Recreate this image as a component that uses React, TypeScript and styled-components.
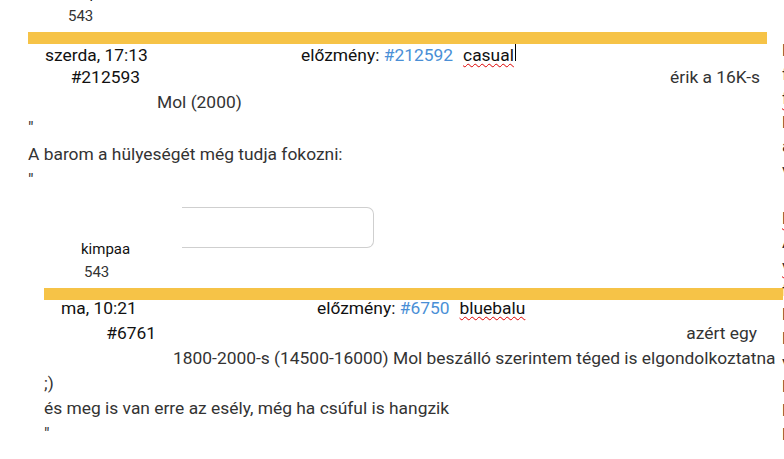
import React from 'react';
import styled, { createGlobalStyle } from 'styled-components';

const Global = createGlobalStyle`
  html, body { margin: 0; padding: 0; background: #fff; }
  body {
    font-family: Roboto, "Noto Sans", "Liberation Sans", sans-serif;
    color: #333;
    overflow: hidden;
  }
`;

const Viewport = styled.div`
  width: 784px;
  height: 459px;
  overflow: hidden;
  display: flex;
  align-items: flex-start;
`;

/* the thread is scrolled: the previous post's footer is partly above the top */
const Main = styled.main`
  flex: none;
  width: 782px;
  margin-top: -49px;
`;

const Side = styled.aside`
  flex: none;
  width: 200px;
  padding-top: 38px;
  font-size: 17.4px;
  line-height: 24px;
  color: #2a2a2a;
  white-space: nowrap;
`;

const SideLine = styled.div<{ $spell?: boolean }>`
  height: 24px;
  ${p => p.$spell ? 'text-decoration: underline wavy #d00; text-decoration-thickness: 1px; text-underline-offset: 2px;' : ''}
`;

const Post = styled.article<{ $indent: number }>`
  margin-left: ${p => p.$indent}px;
  width: 739px;
`;

const Bar = styled.div`
  height: 12px;
  background: #f6c347;
`;

const Header = styled.div`
  display: flex;
  align-items: baseline;
  height: 16px;
  line-height: 16px;
  margin-bottom: 5px;
  font-size: 17.4px;
  color: #111;
  white-space: nowrap;
`;

const When = styled.span`
  flex: none;
  width: 273px;
  padding-left: 17px;
  box-sizing: border-box;
`;

const Ref = styled.span`
  color: #4a8fd6;
`;

const Author = styled.span`
  margin-left: 10px;
  color: #111;
  text-decoration: underline wavy #d00;
  text-decoration-thickness: 1px;
  text-underline-offset: 2px;
`;

const Caret = styled.span`
  display: inline-block;
  width: 1px;
  height: 17px;
  margin-left: 1px;
  background: #000;
  vertical-align: -3px;
`;

const NumberRow = styled.div<{ $trail: number }>`
  display: flex;
  line-height: 25px;
  font-size: 17.4px;
  white-space: nowrap;
  & > span:last-child { padding-right: ${p => p.$trail}px; }
`;

const Num = styled.span`
  flex: none;
  width: 112px;
  text-align: right;
  color: #111;
`;

const Lead = styled.span`
  flex: 1;
  text-align: right;
  color: #333;
`;

const Line = styled.div<{ $indent?: number; $gap?: number }>`
  padding-left: ${p => p.$indent ?? 0}px;
  margin-top: ${p => p.$gap ?? 0}px;
  line-height: 25px;
  font-size: 17.4px;
  color: #333;
  white-space: nowrap;
`;

const Footer = styled.div<{ $indent: number; $first?: boolean }>`
  display: flex;
  align-items: flex-start;
  margin-left: ${p => p.$indent}px;
  margin-top: ${p => (p.$first ? 0 : 15)}px;
  margin-bottom: 4px;
`;

const Who = styled.div`
  flex: none;
  width: 154px;
  box-sizing: border-box;
  padding-top: 31px;
  padding-left: 53px;
  font-size: 15px;
  line-height: 23px;
`;

const Name = styled.div`
  color: #111;
`;

const Score = styled.div`
  padding-left: 3px;
  color: #333;
`;

const ReplyBox = styled.div`
  flex: none;
  width: 191px;
  height: 39px;
  border: 1px solid #cfcfcf;
  border-left: none;
  border-radius: 0 7px 7px 0;
`;

const sideLines: Array<[string, boolean]> = [
  ['lehet', false], ['fel', false], ['fórumon', true], ['lehet', false],
  ['a', false], ['van', false], ['', false], ['lehet', true], ['A', false],
  ['vagy', true], ['fel', false], ['lehet', false], ['lehet', false],
  ['van', false], ['lehet', false], ['lehet', false], ['lehet', false],
];

export default function App() {
  return (
    <>
      <Global />
      <Viewport>
        <Main>
          <Footer $indent={12} $first>
            <Who>
              <Name>kimpaa</Name>
              <Score>543</Score>
            </Who>
            <ReplyBox />
          </Footer>

          <Post $indent={28}>
            <Bar />
            <Header>
              <When>szerda, 17:13</When>
              <span>előzmény:&nbsp;<Ref>#212592</Ref></span>
              <Author>casual</Author>
              <Caret />
            </Header>
            <NumberRow $trail={7}>
              <Num>#212593</Num>
              <Lead>érik a 16K-s</Lead>
            </NumberRow>
            <Line $indent={129}>Mol (2000)</Line>
            <Line>"</Line>
            <Line $gap={2}>A barom a hülyeségét még tudja fokozni:</Line>
            <Line>"</Line>
          </Post>
          <Footer $indent={28}>
            <Who>
              <Name>kimpaa</Name>
              <Score>543</Score>
            </Who>
            <ReplyBox />
          </Footer>

          <Post $indent={44}>
            <Bar />
            <Header>
              <When>ma, 10:21</When>
              <span>előzmény:&nbsp;<Ref>#6750</Ref></span>
              <Author>bluebalu</Author>
            </Header>
            <NumberRow $trail={26}>
              <Num>#6761</Num>
              <Lead>azért egy</Lead>
            </NumberRow>
            <Line $indent={129}>1800-2000-s (14500-16000) Mol beszálló szerintem téged is elgondolkoztatna</Line>
            <Line>;)</Line>
            <Line>és meg is van erre az esély, még ha csúful is hangzik</Line>
            <Line>"</Line>
          </Post>
        </Main>
        <Side>
          {sideLines.map(([t, s], i) => (
            <SideLine key={i} $spell={s}>{t}</SideLine>
          ))}
        </Side>
      </Viewport>
    </>
  );
}
